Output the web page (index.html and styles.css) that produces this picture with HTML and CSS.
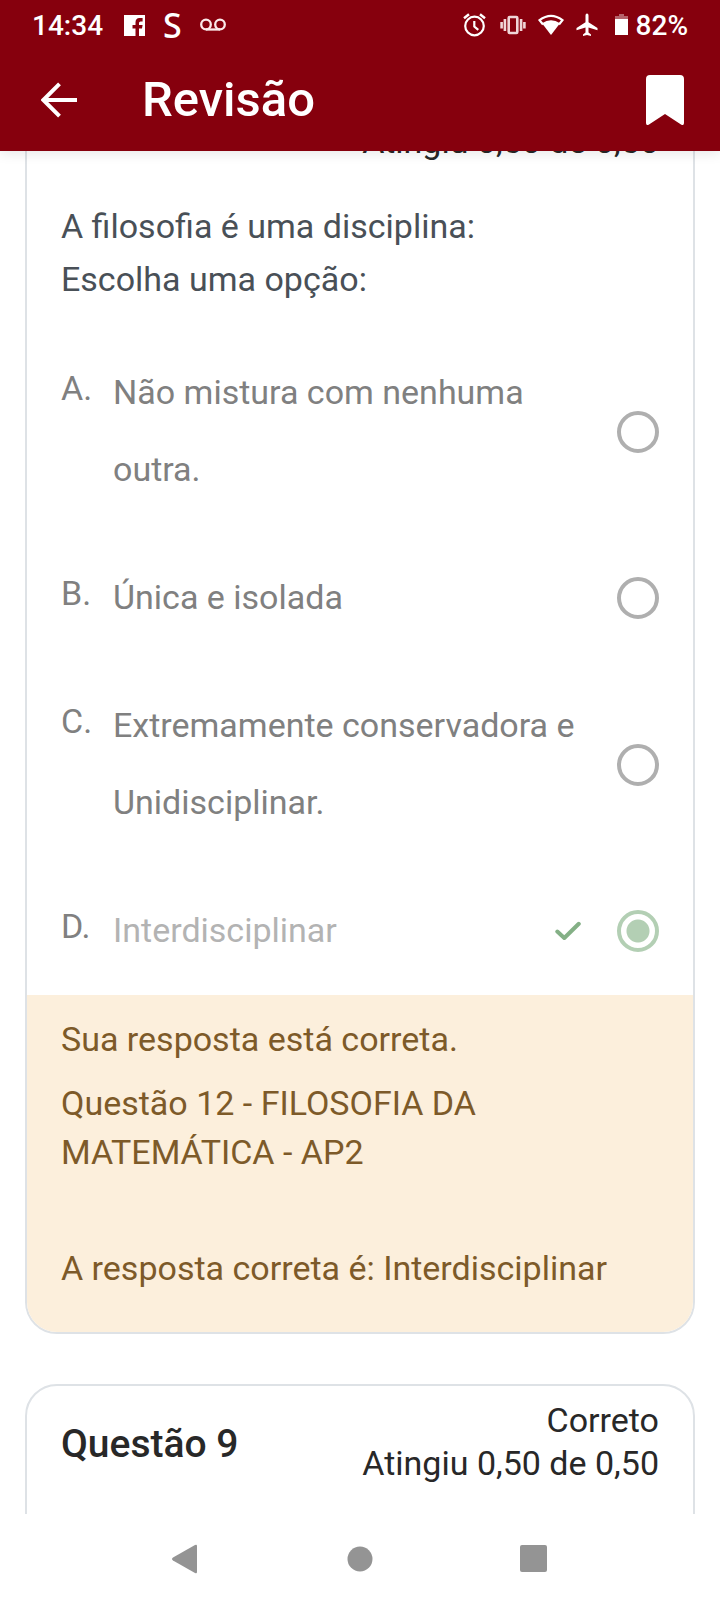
FILE: index.html
```html
<!DOCTYPE html>
<html lang="pt-BR">
<head>
<meta charset="utf-8">
<meta name="viewport" content="width=device-width, initial-scale=1">
<title>Revisão</title>
<link rel="stylesheet" href="styles.css">
</head>
<body>
<div class="app">
  <header class="top">
    <div class="status">
      <div class="status-group status-left">
        <span class="clock">14:34</span>
        <svg width="21" height="21" viewBox="0 0 21 21"><path fill="#fff" fill-rule="evenodd" d="M0 0h21v21h-6v-7.500h3l.6-3.500H15V8q0-1.500 1.600-1.500h2V3h-3.100Q11.500 3 11.500 7.500V10H8.500v3.500h3V21H0z"/></svg>
        <span class="status-s">S</span>
        <svg width="26" height="14" viewBox="0 0 26 14" fill="none" stroke="#fbe9ea" stroke-width="2.300"><circle cx="6" cy="6.500" r="4.800"/><circle cx="20" cy="6.500" r="4.800"/><path d="M6 11.500h14"/></svg>
      </div>
      <div class="status-group status-right">
        <svg width="26" height="24" viewBox="0 0 26 24" fill="none" stroke="#fff" stroke-width="2.200"><circle cx="12.500" cy="13" r="9.300"/><path d="M12.300 8v5.500l4 3.300"/><path d="M2 5.200l5-4M23 5.200l-5-4" stroke-width="2.500"/></svg>
        <svg width="26" height="24" viewBox="0 0 26 24" fill="none" stroke="#f0d5d7" stroke-width="2.600"><rect x="8.700" y="4" width="8.600" height="16" rx="1"/><path d="M4.900 6v12M21.100 6v12M1.600 9v6.500M24.400 9v6.500"/></svg>
        <svg width="26" height="24" viewBox="0 0 26 24"><path fill="none" stroke="#fff" stroke-width="2.200" d="M5 11.500L1.500 7.200Q13-1.500 24.500 7.200L21 11.500"/><path fill="#fff" d="M4 10.200Q13 4.500 22 10.200L13 22z"/></svg>
        <svg width="22" height="24" viewBox="0 0 22 24"><path fill="#fff" d="M11 .5q1.500 0 1.500 2v6.800l9 5.600v2.300l-9-2.800v5l2.500 2V23L11 22l-4 1v-1.600l2.500-2v-5l-9 2.800v-2.300l9-5.600V2.500q0-2 1.500-2z"/></svg>
        <span class="battery">
          <svg width="13" height="22" viewBox="0 0 13 22"><path fill="#b5636b" d="M4 0h5v2h4v4H0V2h4z"/><path fill="#fff" d="M0 5h13v16H0z"/></svg>
          <span>82%</span>
        </span>
      </div>
    </div>
    <div class="toolbar">
      <button class="icon-button" type="button" aria-label="Voltar">
        <svg width="36" height="36" viewBox="0 0 36 36" fill="none" stroke="#fff" stroke-width="4"><path d="M36 18H3M18.500 1.800L2.300 18l16.200 16.200"/></svg>
      </button>
      <h1 class="title">Revisão</h1>
      <button class="icon-button" type="button" aria-label="Marcador">
        <svg width="38" height="50" viewBox="0 0 38 50"><path fill="#fff" d="M4 0h30q4 0 4 4v44q0 3-3 1.500L19 39 3 49.500Q0 51 0 48V4q0-4 4-4z"/></svg>
      </button>
    </div>
  </header>

  <main class="content">
    <div class="questions">
      <article class="card">
        <div class="card-head">
          <p class="score">Atingiu 0,50 de 0,50</p>
        </div>
        <div class="prompt">
          <p>A filosofia é uma disciplina:</p>
          <p>Escolha uma opção:</p>
        </div>
        <div class="options">
          <div class="option">
            <span class="letter">A.</span>
            <label class="answer" for="opt-a">Não mistura com nenhuma outra.</label>
            <input class="radio" type="radio" name="q8" id="opt-a" disabled>
          </div>
          <div class="option">
            <span class="letter">B.</span>
            <label class="answer" for="opt-b">Única e isolada</label>
            <input class="radio" type="radio" name="q8" id="opt-b" disabled>
          </div>
          <div class="option">
            <span class="letter">C.</span>
            <label class="answer" for="opt-c">Extremamente conservadora e Unidisciplinar.</label>
            <input class="radio" type="radio" name="q8" id="opt-c" disabled>
          </div>
          <div class="option">
            <span class="letter">D.</span>
            <label class="answer answer-chosen" for="opt-d">Interdisciplinar</label>
            <svg class="check" width="26" height="20" viewBox="0 0 26 20" fill="none" stroke="#84b086" stroke-width="4" stroke-linecap="round" stroke-linejoin="round"><path d="M2.300 10.500l7 6.500L23.800 2.800"/></svg>
            <input class="radio" type="radio" name="q8" id="opt-d" checked disabled>
          </div>
        </div>
        <div class="feedback">
          <p>Sua resposta está correta.</p>
          <p>Questão 12 - FILOSOFIA DA MATEMÁTICA - AP2</p>
          <p class="right-answer">A resposta correta é: Interdisciplinar</p>
        </div>
      </article>

      <article class="card card-next">
        <div class="card-head">
          <h2 class="card-title">Questão 9</h2>
          <p class="score">Correto<br>Atingiu 0,50 de 0,50</p>
        </div>
      </article>
    </div>
  </main>

  <nav class="system-nav">
    <button class="icon-button" type="button" aria-label="Voltar no sistema">
      <svg width="30" height="30" viewBox="0 0 30 30"><path fill="#949494" d="M1 13.500L23 1q2-1 2 1v26q0 2-2 1L1 16.500q-2-1.500 0-3z"/></svg>
    </button>
    <button class="icon-button" type="button" aria-label="Início">
      <svg width="26" height="26" viewBox="0 0 26 26"><circle cx="13" cy="13" r="12.500" fill="#949494"/></svg>
    </button>
    <button class="icon-button" type="button" aria-label="Aplicativos recentes">
      <svg width="27" height="27" viewBox="0 0 27 27"><rect width="27" height="27" rx="2" fill="#949494"/></svg>
    </button>
  </nav>
</div>
</body>
</html>
```
FILE: styles.css
```css
* {
  box-sizing: border-box;
}

body {
  margin: 0;
  background: #fff;
  font-family: Roboto, "Liberation Sans", sans-serif;
  font-size: 34px;
  color: #282828;
}

h1, h2, p {
  margin: 0;
  font-weight: inherit;
}

svg {
  display: block;
  flex: none;
}

.app {
  display: flex;
  flex-direction: column;
  height: 100vh;
}

/* Status bar and toolbar */

.top {
  position: relative;
  z-index: 1;
  background: #86000d;
  color: #fff;
  box-shadow: 0 2px 12px rgba(0, 0, 0, 0.1);
}

.status {
  display: flex;
  justify-content: space-between;
  align-items: center;
  height: 50px;
  padding: 0 32px;
  font-size: 28px;
  font-weight: 500;
}

.status-group {
  display: flex;
  align-items: center;
}

.status-left {
  gap: 18px;
}

.clock {
  margin-right: 3px;
}

.status-right {
  gap: 12px;
}

.status-s {
  font-family: "Noto Sans", sans-serif;
  font-size: 34px;
  line-height: 1;
}

.battery {
  display: flex;
  align-items: center;
  gap: 8px;
  margin-left: 5px;
}

.toolbar {
  display: flex;
  align-items: center;
  height: 101px;
  padding: 0 36px 2px 41px;
}

.icon-button {
  display: grid;
  place-items: center;
  padding: 0;
  border: 0;
  background: none;
}

.title {
  flex: 1;
  padding-left: 65px;
  font-size: 49px;
  font-weight: 500;
}

/* Scrolled list of questions */

.content {
  flex: 1;
  min-height: 0;
  overflow: hidden;
}

.questions {
  display: flex;
  flex-direction: column;
  gap: 50px;
  margin-top: -46px;
  padding: 0 25px;
}

.card {
  overflow: hidden;
  flex: none;
  border: 2px solid #dee2e6;
  border-radius: 32px;
  background: #fff;
}

.card-next {
  padding-bottom: 40px;
}

.card-head {
  display: flex;
  align-items: center;
  padding: 13px 34px 39px;
}

.card-title {
  padding-top: 3px;
  font-size: 39px;
  font-weight: 500;
}

.score {
  margin-left: auto;
  line-height: 43px;
  text-align: right;
}

.prompt {
  display: grid;
  gap: 4px;
  padding: 0 34px 25px;
  line-height: 49px;
  color: #495057;
}

.option {
  display: flex;
  align-items: center;
  padding: 0 34px;
  color: #808080;
}

.letter {
  align-self: flex-start;
  width: 52px;
  padding-top: 35px;
  line-height: 49px;
}

.answer {
  flex: 1;
  padding: 25px 0 26px;
  line-height: 77px;
}

.answer-chosen {
  color: #b3b3b3;
}

.radio {
  appearance: none;
  flex: none;
  width: 42px;
  height: 42px;
  margin: 0 0 0 36px;
  border: 4px solid #afafaf;
  border-radius: 50%;
}

.radio:checked {
  border-color: #b3cfb4;
  background: radial-gradient(circle, #b3cfb4 11px, transparent 12px);
}

.feedback {
  display: grid;
  gap: 15px;
  padding: 20px 34px 39px;
  background: #fcefdc;
  color: #7d5a29;
  line-height: 49px;
}

.right-answer {
  padding-top: 52px;
}

/* System navigation */

.system-nav {
  display: grid;
  grid-template-columns: repeat(3, 1fr);
  align-items: center;
  height: 86px;
  padding: 3px 100px 0;
  background: #fff;
}
```
